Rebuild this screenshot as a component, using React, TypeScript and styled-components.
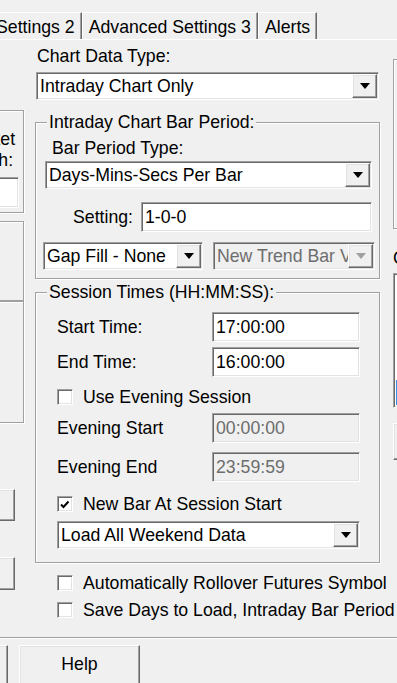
import styled, { createGlobalStyle } from "styled-components";

const GlobalStyle = createGlobalStyle`
  html, body {
    margin: 0;
    padding: 0;
    background: #f0f0f0;
  }
  body {
    font-family: "Liberation Sans", Arial, sans-serif;
    font-size: 17.7px;
    color: #000;
  }
  * {
    box-sizing: border-box;
  }
`;

function CheckMark() {
  return (
    <svg width="10" height="9" viewBox="0 0 10 9">
      <path d="M1 4.5 L3.5 7 L8.5 1.5" fill="none" stroke="#000" strokeWidth="2" />
    </svg>
  );
}

function Combo({ text, disabled }: { text: string; disabled?: boolean }) {
  return (
    <>
      <ComboText>{text}</ComboText>
      <DropButton>
        <Arrow $disabled={disabled} />
      </DropButton>
    </>
  );
}

function Check({ label, checked }: { label: string; checked?: boolean }) {
  return (
    <>
      <CheckBox>{checked && <CheckMark />}</CheckBox>
      <span>{label}</span>
    </>
  );
}

function App() {
  return (
    <>
      <GlobalStyle />
      <Dialog>
        <TabStrip>
          <Tab $first>Settings 2</Tab>
          <Tab>Advanced Settings 3</Tab>
          <Tab>Alerts</Tab>
        </TabStrip>

        <Body>
          <LeftColumn>
            <SidePanel $top={70} $height={103}>
              <SideCaption>
                Market
                <br />
                Depth:
              </SideCaption>
              <SideEdit />
            </SidePanel>
            <SidePanel $top={8} $height={80} />
            <SidePanel $top={0} $height={122} />
            <SideButton $top={66} $height={32} />
            <SideButton $top={36} $height={33} />
          </LeftColumn>

          <MainColumn>
            <FieldLabel>Chart Data Type:</FieldLabel>
            <DataTypeCombo>
              <Combo text="Intraday Chart Only" />
            </DataTypeCombo>

            <GroupBox $top={12} $bottom={8}>
              <Legend>Intraday Chart Bar Period:</Legend>
              <SubLabel>Bar Period Type:</SubLabel>
              <PeriodCombo>
                <Combo text="Days-Mins-Secs Per Bar" />
              </PeriodCombo>
              <SettingRow>
                <span>Setting:</span>
                <EditBox $width={231}>1-0-0</EditBox>
              </SettingRow>
              <ComboRow>
                <ComboBox $width={160}>
                  <Combo text="Gap Fill - None" />
                </ComboBox>
                <ComboBox $width={162} $disabled>
                  <Combo text="New Trend Bar Visible" disabled />
                </ComboBox>
              </ComboRow>
            </GroupBox>

            <GroupBox $top={3} $bottom={13}>
              <Legend>Session Times (HH:MM:SS):</Legend>
              <TimeRow $top={10}>
                <span>Start Time:</span>
                <EditBox $width={148}>17:00:00</EditBox>
              </TimeRow>
              <TimeRow $top={5}>
                <span>End Time:</span>
                <EditBox $width={148}>16:00:00</EditBox>
              </TimeRow>
              <CheckRow $top={10} $indent={14}>
                <Check label="Use Evening Session" />
              </CheckRow>
              <TimeRow $top={6}>
                <span>Evening Start</span>
                <EditBox $width={148} $disabled>00:00:00</EditBox>
              </TimeRow>
              <TimeRow $top={9}>
                <span>Evening End</span>
                <EditBox $width={148} $disabled>23:59:59</EditBox>
              </TimeRow>
              <CheckRow $top={12} $indent={14}>
                <Check label="New Bar At Session Start" checked />
              </CheckRow>
              <WeekendCombo>
                <Combo text="Load All Weekend Data" />
              </WeekendCombo>
            </GroupBox>

            <CheckRow $top={10} $indent={22}>
              <Check label="Automatically Rollover Futures Symbol" />
            </CheckRow>
            <CheckRow $top={7} $indent={22}>
              <Check label="Save Days to Load, Intraday Bar Period" />
            </CheckRow>
          </MainColumn>

          <RightColumn>
            <SidePanel $top={19} $height={170} />
            <RightLabel>Chart Style:</RightLabel>
            <ListBox>
              <ListItem $selected />
            </ListBox>
            <RightBox />
          </RightColumn>
        </Body>

        <Footer>
          <PushButton $width={80} $offset={-72}>OK</PushButton>
          <PushButton $width={121}>Help</PushButton>
        </Footer>
      </Dialog>
    </>
  );
}
export default App;

const sunken = `
  border: 1px solid;
  border-color: #a0a0a0 #ffffff #ffffff #a0a0a0;
  box-shadow: inset 1px 1px 0 #696969, inset -1px -1px 0 #e3e3e3;
`;

const raised = `
  border: 1px solid;
  border-color: #ffffff #696969 #696969 #ffffff;
  box-shadow: inset -1px -1px 0 #a0a0a0, inset 1px 1px 0 #e3e3e3;
  background: #f0f0f0;
`;

const etched = `
  border: 1px solid #a0a0a0;
  box-shadow: inset 1px 1px 0 #ffffff, 1px 1px 0 #ffffff;
`;

const Dialog = styled.div`
  width: 397px;
  height: 683px;
  overflow: hidden;
  display: flex;
  flex-direction: column;
  background: #f0f0f0;
`;

const TabStrip = styled.div`
  flex: none;
  height: 40px;
  display: flex;
  align-items: flex-end;
  border-bottom: 1px solid #ffffff;
`;

const Tab = styled.div<{ $first?: boolean }>`
  height: 27px;
  padding: 1px 6px 0;
  margin-left: ${(p) => (p.$first ? "-11px" : "0")};
  line-height: 27px;
  white-space: nowrap;
  border-top: 1px solid #ffffff;
  border-left: 1px solid #ffffff;
  border-right: 1px solid #696969;
  box-shadow: inset -1px 0 0 #a0a0a0;
`;

const Body = styled.div`
  flex: 1;
  display: flex;
  margin-left: -12px;
`;

const LeftColumn = styled.div`
  flex: none;
  width: 36px;
  margin-right: 11px;
  display: flex;
  flex-direction: column;
`;

const SidePanel = styled.div<{ $top: number; $height: number }>`
  flex: none;
  margin-top: ${(p) => p.$top}px;
  height: ${(p) => p.$height}px;
  ${etched}
  display: flex;
  flex-direction: column;
`;

const SideCaption = styled.div`
  margin: 18px 0 0 -28px;
  line-height: 21px;
  white-space: nowrap;
`;

const SideEdit = styled.div`
  height: 31px;
  margin: 6px 4px 0 0;
  background: #fff;
  ${sunken}
`;

const SideButton = styled.div<{ $top: number; $height: number }>`
  flex: none;
  margin: ${(p) => p.$top}px 9px 0 0;
  height: ${(p) => p.$height}px;
  ${raised}
`;

const MainColumn = styled.div`
  flex: none;
  width: 345px;
  display: flex;
  flex-direction: column;
`;

const FieldLabel = styled.div`
  margin: 6px 0 0 2px;
  line-height: 20px;
`;

const ComboBox = styled.div<{ $width?: number; $disabled?: boolean }>`
  flex: none;
  display: flex;
  align-items: center;
  height: 28px;
  width: ${(p) => (p.$width ? `${p.$width}px` : "auto")};
  padding: 1px 1px 1px 3px;
  background: ${(p) => (p.$disabled ? "#f0f0f0" : "#ffffff")};
  color: ${(p) => (p.$disabled ? "#6d6d6d" : "#000000")};
  ${sunken}
`;

const DataTypeCombo = styled(ComboBox)`
  margin: 6px 1px 0;
`;

const PeriodCombo = styled(ComboBox)`
  margin: 3px 3px 0 2px;
`;

const WeekendCombo = styled(ComboBox)`
  margin: 7px 15px 0 14px;
`;

const ComboText = styled.span`
  flex: 1;
  min-width: 0;
  overflow: hidden;
  white-space: nowrap;
  line-height: 24px;
`;

const DropButton = styled.span`
  flex: none;
  width: 25px;
  height: 24px;
  display: flex;
  align-items: center;
  justify-content: center;
  ${raised}
`;

const Arrow = styled.span<{ $disabled?: boolean }>`
  width: 0;
  height: 0;
  border-left: 5px solid transparent;
  border-right: 5px solid transparent;
  border-top: 6px solid ${(p) => (p.$disabled ? "#a0a0a0" : "#000000")};
`;

const GroupBox = styled.fieldset<{ $top: number; $bottom: number }>`
  margin: ${(p) => p.$top}px 0 0;
  padding: 0 4px ${(p) => p.$bottom}px 7px;
  min-width: 0;
  ${etched}
  display: flex;
  flex-direction: column;
`;

const Legend = styled.legend`
  margin-left: 4px;
  padding: 0 2px;
  line-height: 20px;
  background: #f0f0f0;
`;

const SubLabel = styled.div`
  margin: 6px 0 0 9px;
  line-height: 20px;
`;

const EditBox = styled.div<{ $width: number; $disabled?: boolean }>`
  flex: none;
  width: ${(p) => p.$width}px;
  height: 30px;
  padding: 0 0 0 3px;
  line-height: 28px;
  white-space: nowrap;
  background: ${(p) => (p.$disabled ? "#f0f0f0" : "#ffffff")};
  color: ${(p) => (p.$disabled ? "#6d6d6d" : "#000000")};
  ${sunken}
`;

const SettingRow = styled.div`
  display: flex;
  align-items: center;
  gap: 8px;
  margin-top: 13px;
  padding-left: 30px;
`;

const ComboRow = styled.div`
  display: flex;
  gap: 10px;
  margin-top: 10px;
`;

const TimeRow = styled.div<{ $top: number }>`
  display: flex;
  align-items: center;
  justify-content: space-between;
  margin-top: ${(p) => p.$top}px;
  padding: 0 15px 0 14px;
`;

const CheckRow = styled.div<{ $top: number; $indent: number }>`
  display: flex;
  align-items: center;
  gap: 10px;
  height: 20px;
  margin-top: ${(p) => p.$top}px;
  padding-left: ${(p) => p.$indent}px;
  white-space: nowrap;
`;

const CheckBox = styled.span`
  flex: none;
  width: 16px;
  height: 16px;
  display: flex;
  align-items: center;
  padding-left: 2px;
  background: #ffffff;
  ${sunken}
`;

const RightColumn = styled.div`
  flex: none;
  width: 120px;
  margin-left: 13px;
  display: flex;
  flex-direction: column;
`;

const RightLabel = styled.div`
  margin-top: 19px;
  line-height: 20px;
  white-space: nowrap;
`;

const ListBox = styled.div`
  height: 135px;
  margin-top: 5px;
  background: #ffffff;
  display: flex;
  flex-direction: column;
  justify-content: flex-end;
  padding: 2px;
  ${sunken}
`;

const ListItem = styled.div<{ $selected?: boolean }>`
  height: 25px;
  background: ${(p) => (p.$selected ? "#3390e6" : "transparent")};
`;

const RightBox = styled.div`
  height: 37px;
  margin-top: 15px;
  ${raised}
`;

const Footer = styled.div`
  flex: none;
  height: 46px;
  display: flex;
  gap: 11px;
  padding-top: 7px;
  border-top: 1px solid #a0a0a0;
  box-shadow: inset 0 1px 0 #ffffff;
`;

const PushButton = styled.div<{ $width: number; $offset?: number }>`
  flex: none;
  width: ${(p) => p.$width}px;
  height: 40px;
  margin-left: ${(p) => p.$offset ?? 0}px;
  display: flex;
  align-items: center;
  justify-content: center;
  padding-bottom: 1px;
  ${raised}
`;
